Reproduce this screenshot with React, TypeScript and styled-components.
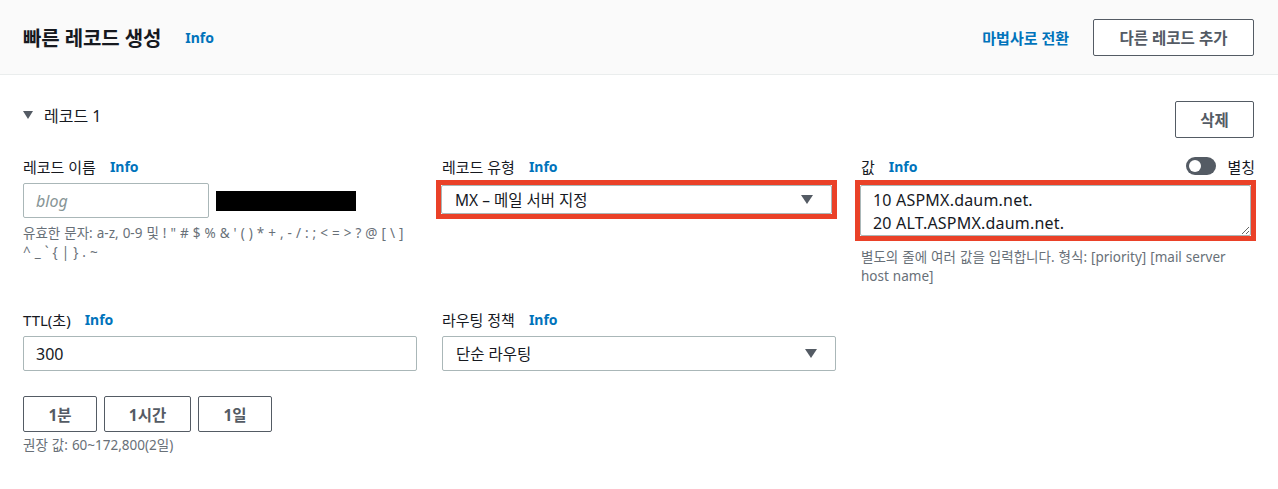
import React from 'react';
import styled, { createGlobalStyle } from 'styled-components';

const GlobalStyle = createGlobalStyle`
	body {
		margin: 0;
		background: #ffffff;
		font-family: 'Noto Sans', 'Noto Sans CJK KR', sans-serif;
		color: #16191f;
	}
`;

const Page = styled.div`
	width: 1278px;
	min-height: 489px;
	background: #fff;
`;

const Header = styled.header`
	height: 74px;
	padding: 0 24px 0 23px;
	display: flex;
	align-items: center;
	justify-content: space-between;
	background: #fafafa;
	border-bottom: 1px solid #eaeded;
`;

const TitleGroup = styled.div`
	display: flex;
	align-items: center;
	gap: 24px;
`;

const Title = styled.h1`
	margin: 0;
	font-size: 20px;
	font-weight: 700;
	letter-spacing: -0.1px;
`;

const InfoLink = styled.a<{ $size?: number }>`
	color: #0073bb;
	font-weight: 700;
	font-size: ${(p) => p.$size ?? 14}px;
	text-decoration: none;
	cursor: pointer;
`;

const HeaderActions = styled.div`
	display: flex;
	align-items: center;
	gap: 24px;
`;

const Button = styled.button<{ $w?: number; $h?: number }>`
	width: ${(p) => (p.$w ? `${p.$w}px` : 'auto')};
	height: ${(p) => p.$h ?? 37}px;
	padding: 0 12px;
	border: 1px solid #545b64;
	border-radius: 2px;
	background: #fff;
	color: #545b64;
	font-family: inherit;
	font-size: 15.5px;
	font-weight: 700;
	cursor: pointer;
`;

const Body = styled.main`
	padding: 26px 24px 0 23px;
`;

const RecordHead = styled.div`
	display: flex;
	justify-content: space-between;
	align-items: flex-start;
`;

const RecordTitle = styled.div`
	display: flex;
	align-items: center;
	gap: 11px;
	padding-top: 2px;
	font-size: 16px;
	color: #16191f;
`;

const Caret = styled.span`
	width: 0;
	height: 0;
	border-left: 5.5px solid transparent;
	border-right: 5.5px solid transparent;
	border-top: 8px solid #545b64;
`;

const Grid = styled.div<{ $top: number }>`
	display: grid;
	grid-template-columns: 394px 394px 394px;
	column-gap: 25px;
	margin-top: ${(p) => p.$top}px;
	align-items: start;
`;

const Field = styled.div`
	display: flex;
	flex-direction: column;
`;

const LabelRow = styled.div`
	display: flex;
	align-items: center;
	justify-content: space-between;
	height: 22px;
	margin-bottom: 6px;
`;

const Label = styled.label`
	display: flex;
	align-items: center;
	gap: 14px;
	font-size: 15px;
	color: #16191f;
`;

const Input = styled.input<{ $w?: number }>`
	box-sizing: border-box;
	width: ${(p) => (p.$w ? `${p.$w}px` : '100%')};
	height: 35px;
	padding: 0 12px;
	border: 1px solid #aab7b8;
	border-radius: 2px;
	font-family: inherit;
	font-size: 16px;
	color: #16191f;
	outline: none;

	&::placeholder {
		color: #879596;
		font-style: italic;
	}
`;

const InputRow = styled.div`
	display: flex;
	align-items: center;
	gap: 7px;
`;

const Redacted = styled.div`
	width: 140px;
	height: 20px;
	background: #000;
`;

const Help = styled.div<{ $top?: number }>`
	margin-top: ${(p) => p.$top ?? 6}px;
	font-size: 13.5px;
	line-height: 19px;
	color: #687078;
	word-spacing: 0.5px;
`;

const Highlight = styled.div`
	margin: -3px -1px 0 -6px;
	border: 5px solid #ea4128;
`;

const SelectBox = styled.div<{ $h: number }>`
	box-sizing: border-box;
	height: ${(p) => p.$h}px;
	padding: 0 18px 0 13px;
	display: flex;
	align-items: center;
	justify-content: space-between;
	border: 1px solid #aab7b8;
	border-radius: 2px;
	background: #fff;
	font-size: 15.5px;
	color: #16191f;
`;

const DropArrow = styled.span`
	width: 0;
	height: 0;
	border-left: 6px solid transparent;
	border-right: 6px solid transparent;
	border-top: 9px solid #545b64;
`;

const TextArea = styled.textarea`
	display: block;
	box-sizing: border-box;
	width: 100%;
	height: 51px;
	padding: 3px 12px 0 12px;
	border: 1px solid #aab7b8;
	border-radius: 2px;
	font-family: inherit;
	font-size: 16px;
	letter-spacing: 0.2px;
	line-height: 23px;
	color: #16191f;
	outline: none;
	overflow: hidden;
`;

const Toggle = styled.div`
	display: flex;
	align-items: center;
	gap: 11px;
	font-size: 15px;
	color: #16191f;
`;

const Track = styled.span`
	position: relative;
	width: 30px;
	height: 18px;
	border-radius: 9px;
	background: #545b64;
`;

const Knob = styled.span`
	position: absolute;
	left: 3px;
	top: 3px;
	width: 12px;
	height: 12px;
	border-radius: 50%;
	background: #fff;
`;

const QuickButtons = styled.div`
	display: flex;
	gap: 7px;
	margin-top: 25px;
`;

const nameHelp = '유효한 문자: a-z, 0-9 및 ! " # $ % & \' ( ) * + , - / : ; < = > ? @ [ \\ ] ^\u00a0_ ` { | } . ~';

export default function App() {
	return (
		<Page>
			<GlobalStyle />
			<Header>
				<TitleGroup>
					<Title>빠른 레코드 생성</Title>
					<InfoLink>Info</InfoLink>
				</TitleGroup>
				<HeaderActions>
					<InfoLink $size={15}>마법사로 전환</InfoLink>
					<Button $w={161}>다른 레코드 추가</Button>
				</HeaderActions>
			</Header>
			<Body>
				<RecordHead>
					<RecordTitle>
						<Caret />
						레코드 1
					</RecordTitle>
					<Button $w={79}>삭제</Button>
				</RecordHead>

				<Grid $top={17}>
					<Field>
						<LabelRow>
							<Label>
								레코드 이름 <InfoLink>Info</InfoLink>
							</Label>
						</LabelRow>
						<InputRow>
							<Input $w={186} placeholder="blog" />
							<Redacted />
						</InputRow>
						<Help>{nameHelp}</Help>
					</Field>

					<Field>
						<LabelRow>
							<Label>
								레코드 유형 <InfoLink>Info</InfoLink>
							</Label>
						</LabelRow>
						<Highlight>
							<SelectBox $h={29}>
								MX – 메일 서버 지정
								<DropArrow />
							</SelectBox>
						</Highlight>
					</Field>

					<Field>
						<LabelRow>
							<Label>
								값 <InfoLink>Info</InfoLink>
							</Label>
							<Toggle>
								<Track>
									<Knob />
								</Track>
								별칭
							</Toggle>
						</LabelRow>
						<Highlight>
							<TextArea defaultValue={'10 ASPMX.daum.net.\n20 ALT.ASPMX.daum.net.'} />
						</Highlight>
						<Help $top={7}>
							별도의 줄에 여러 값을 입력합니다. 형식: [priority] [mail server host name]
						</Help>
					</Field>
				</Grid>

				<Grid $top={22}>
					<Field>
						<LabelRow>
							<Label>
								TTL(초) <InfoLink>Info</InfoLink>
							</Label>
						</LabelRow>
						<Input defaultValue="300" />
						<QuickButtons>
							<Button $w={74} $h={36}>1분</Button>
							<Button $w={87} $h={36}>1시간</Button>
							<Button $w={74} $h={36}>1일</Button>
						</QuickButtons>
						<Help $top={4}>권장 값: 60~172,800(2일)</Help>
					</Field>

					<Field>
						<LabelRow>
							<Label>
								라우팅 정책 <InfoLink>Info</InfoLink>
							</Label>
						</LabelRow>
						<SelectBox $h={35}>
							단순 라우팅
							<DropArrow />
						</SelectBox>
					</Field>
				</Grid>
			</Body>
		</Page>
	);
}
